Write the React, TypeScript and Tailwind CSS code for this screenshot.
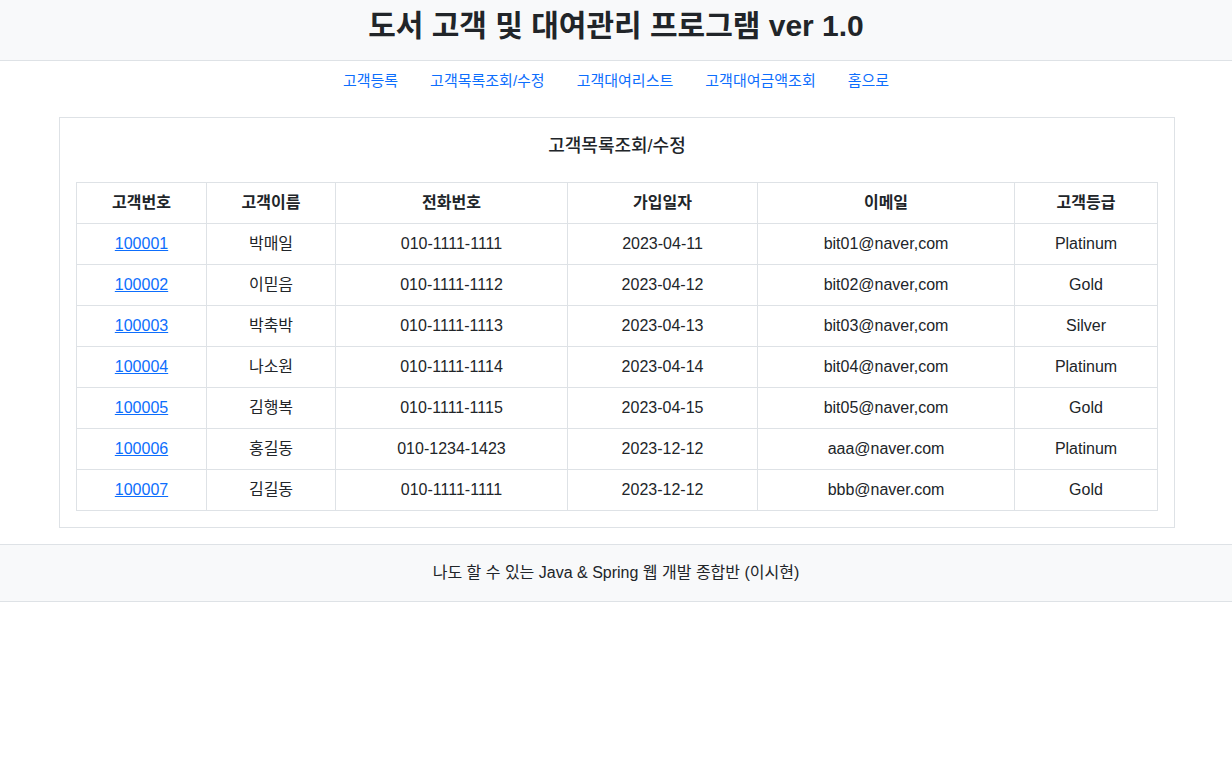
const customers = [
  { id: '100001', name: '박매일', phone: '010-1111-1111', date: '2023-04-11', email: 'bit01@naver,com', grade: 'Platinum' },
  { id: '100002', name: '이믿음', phone: '010-1111-1112', date: '2023-04-12', email: 'bit02@naver,com', grade: 'Gold' },
  { id: '100003', name: '박축박', phone: '010-1111-1113', date: '2023-04-13', email: 'bit03@naver,com', grade: 'Silver' },
  { id: '100004', name: '나소원', phone: '010-1111-1114', date: '2023-04-14', email: 'bit04@naver,com', grade: 'Platinum' },
  { id: '100005', name: '김행복', phone: '010-1111-1115', date: '2023-04-15', email: 'bit05@naver,com', grade: 'Gold' },
  { id: '100006', name: '홍길동', phone: '010-1234-1423', date: '2023-12-12', email: 'aaa@naver.com', grade: 'Platinum' },
  { id: '100007', name: '김길동', phone: '010-1111-1111', date: '2023-12-12', email: 'bbb@naver.com', grade: 'Gold' },
];

const menus = ['고객등록', '고객목록조회/수정', '고객대여리스트', '고객대여금액조회', '홈으로'];

const App = () => {
  return (
    <div className="min-h-screen bg-white text-[#212529] font-['Liberation_Sans','Noto_Sans_CJK_KR',sans-serif]">
      {/* Header */}
      <header className="h-[61px] bg-[#f8f9fa] border-b border-[#dee2e6] flex items-center justify-center pb-[8px]">
        <h1 className="text-[30px] font-semibold leading-[38px]">도서 고객 및 대여관리 프로그램 ver 1.0</h1>
      </header>

      {/* Nav */}
      <nav className="flex justify-center h-[40px] items-center">
        {menus.map((m) => (
          <a key={m} href="#" className="px-4 text-[15px] text-[#0d6efd]">
            {m}
          </a>
        ))}
      </nav>

      {/* Main */}
      <main className="ml-[59px] w-[1116px] mt-[16px] border border-[#dee2e6] px-4 pt-4 pb-4">
        <h2 className="text-center text-[18px] font-medium leading-[24px] mb-[24px]">고객목록조회/수정</h2>
        <table className="w-full border-collapse text-[16px] text-center">
          <thead>
            <tr className="h-[41px]">
              <th className="border border-[#dee2e6] w-[130px] font-bold">고객번호</th>
              <th className="border border-[#dee2e6] w-[129px] font-bold">고객이름</th>
              <th className="border border-[#dee2e6] w-[232px] font-bold">전화번호</th>
              <th className="border border-[#dee2e6] w-[190px] font-bold">가입일자</th>
              <th className="border border-[#dee2e6] w-[257px] font-bold">이메일</th>
              <th className="border border-[#dee2e6] font-bold">고객등급</th>
            </tr>
          </thead>
          <tbody>
            {customers.map((c) => (
              <tr key={c.id} className="h-[41px]">
                <td className="border border-[#dee2e6]">
                  <a href="#" className="text-[#0d6efd] underline">{c.id}</a>
                </td>
                <td className="border border-[#dee2e6]">{c.name}</td>
                <td className="border border-[#dee2e6]">{c.phone}</td>
                <td className="border border-[#dee2e6]">{c.date}</td>
                <td className="border border-[#dee2e6]">{c.email}</td>
                <td className="border border-[#dee2e6]">{c.grade}</td>
              </tr>
            ))}
          </tbody>
        </table>
      </main>

      {/* Footer */}
      <footer className="mt-[16px] bg-[#f8f9fa] border-y border-[#dee2e6] h-[58px] flex items-center justify-center text-[16px]">
        나도 할 수 있는 Java &amp; Spring 웹 개발 종합반 (이시현)
      </footer>
    </div>
  );
};

export default App;
